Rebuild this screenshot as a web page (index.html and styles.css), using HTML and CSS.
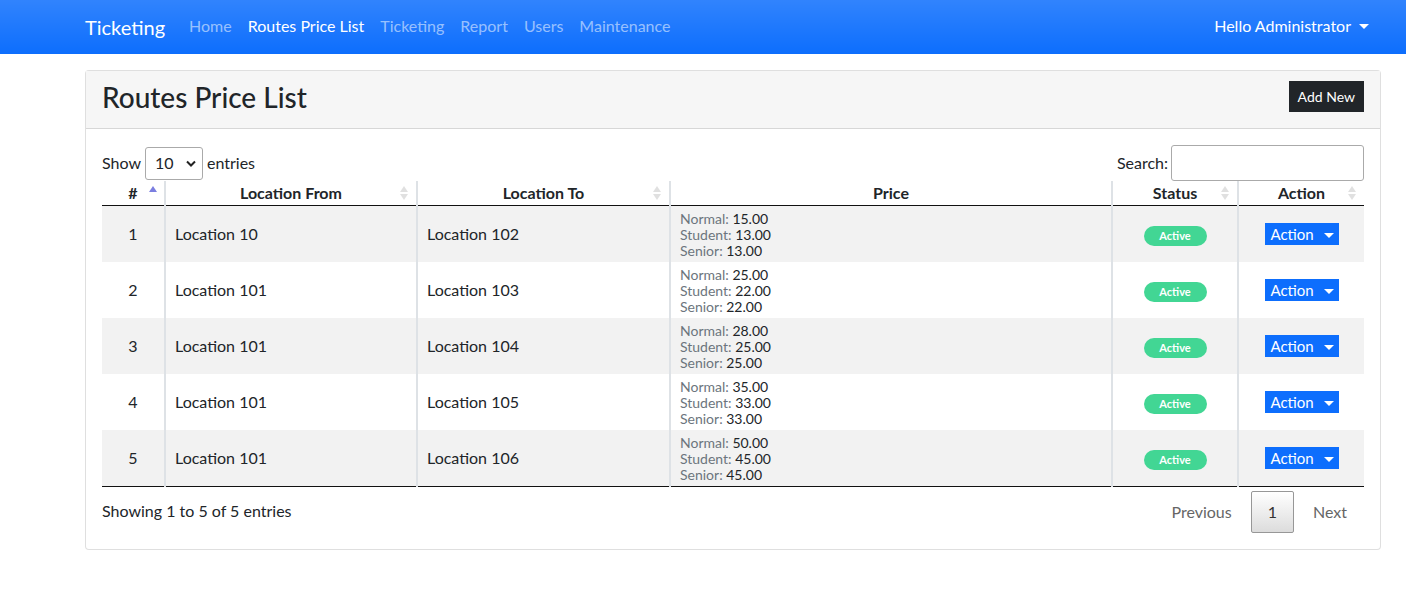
FILE: index.html
```html
<!DOCTYPE html>
<html lang="en">
<head>
<meta charset="utf-8">
<title>Routes Price List</title>
<link rel="stylesheet" href="styles.css">
</head>
<body>
<nav class="navbar">
  <div class="nav-inner">
    <a class="brand" href="#">Ticketing</a>
    <ul class="nav-links">
      <li><a href="#">Home</a></li>
      <li><a href="#" class="active">Routes Price List</a></li>
      <li><a href="#">Ticketing</a></li>
      <li><a href="#">Report</a></li>
      <li><a href="#">Users</a></li>
      <li><a href="#">Maintenance</a></li>
    </ul>
    <a class="user" href="#">Hello Administrator <span class="caret"></span></a>
  </div>
</nav>

<main class="page">
  <section class="card">
    <header class="card-header">
      <h3 class="card-title">Routes Price List</h3>
      <button class="btn-dark">Add New</button>
    </header>
    <div class="card-body">
      <div class="dt-top">
        <label class="length">Show
          <span class="select">10 <svg width="10" height="7" viewBox="0 0 10 7"><path d="M1 1.5l4 4 4-4" fill="none" stroke="#222" stroke-width="2"/></svg></span>
          entries</label>
        <label class="search">Search:<span class="search-input"></span></label>
      </div>
      <table class="dt">
        <thead>
          <tr>
            <th class="sort asc">#</th>
            <th class="sort">Location From</th>
            <th class="sort">Location To</th>
            <th>Price</th>
            <th class="sort">Status</th>
            <th class="sort">Action</th>
          </tr>
        </thead>
        <tbody>
          <tr>
            <td class="num">1</td><td>Location 10</td><td>Location 102</td>
            <td class="price"><span class="lbl">Normal:</span> 15.00<br><span class="lbl">Student:</span> 13.00<br><span class="lbl">Senior:</span> 13.00</td>
            <td class="center"><span class="badge">Active</span></td>
            <td class="center"><button class="btn-action">Action <span class="caret"></span></button></td>
          </tr>
          <tr>
            <td class="num">2</td><td>Location 101</td><td>Location 103</td>
            <td class="price"><span class="lbl">Normal:</span> 25.00<br><span class="lbl">Student:</span> 22.00<br><span class="lbl">Senior:</span> 22.00</td>
            <td class="center"><span class="badge">Active</span></td>
            <td class="center"><button class="btn-action">Action <span class="caret"></span></button></td>
          </tr>
          <tr>
            <td class="num">3</td><td>Location 101</td><td>Location 104</td>
            <td class="price"><span class="lbl">Normal:</span> 28.00<br><span class="lbl">Student:</span> 25.00<br><span class="lbl">Senior:</span> 25.00</td>
            <td class="center"><span class="badge">Active</span></td>
            <td class="center"><button class="btn-action">Action <span class="caret"></span></button></td>
          </tr>
          <tr>
            <td class="num">4</td><td>Location 101</td><td>Location 105</td>
            <td class="price"><span class="lbl">Normal:</span> 35.00<br><span class="lbl">Student:</span> 33.00<br><span class="lbl">Senior:</span> 33.00</td>
            <td class="center"><span class="badge">Active</span></td>
            <td class="center"><button class="btn-action">Action <span class="caret"></span></button></td>
          </tr>
          <tr>
            <td class="num">5</td><td>Location 101</td><td>Location 106</td>
            <td class="price"><span class="lbl">Normal:</span> 50.00<br><span class="lbl">Student:</span> 45.00<br><span class="lbl">Senior:</span> 45.00</td>
            <td class="center"><span class="badge">Active</span></td>
            <td class="center"><button class="btn-action">Action <span class="caret"></span></button></td>
          </tr>
        </tbody>
      </table>
      <div class="dt-bottom">
        <div class="info">Showing 1 to 5 of 5 entries</div>
        <div class="paging">
          <span class="pg">Previous</span>
          <span class="pg current">1</span>
          <span class="pg">Next</span>
        </div>
      </div>
    </div>
  </section>
</main>
</body>
</html>
```
FILE: styles.css
```css
* { box-sizing: border-box; }
html, body { margin: 0; padding: 0; }
body {
  font-family: "Lato", "Open Sans", sans-serif;
  font-size: 16px;
  line-height: 1.5;
  color: #212529;
  background: #fff;
}
a { text-decoration: none; color: inherit; }

.navbar {
  height: 54px;
  background: #0d6efd linear-gradient(180deg, rgba(255,255,255,.15), rgba(255,255,255,0));
}
.nav-inner {
  display: flex;
  align-items: center;
  height: 100%;
  padding: 0 37px 2px 85px;
}
.brand {
  color: #fff;
  font-size: 20px;
  margin-right: 16px;
  padding-top: 1px;
}
.nav-links {
  display: flex;
  list-style: none;
  margin: 0;
  padding: 0;
  flex: 1;
}
.nav-links a {
  display: block;
  padding: 8px;
  color: rgba(255,255,255,.55);
}
.nav-links a.active { color: #fff; }
.user { color: #fff; display: flex; align-items: center; }
.caret {
  display: inline-block;
  width: 0; height: 0;
  border-left: 5px solid transparent;
  border-right: 5px solid transparent;
  border-top: 5px solid currentColor;
  margin-left: 8px;
  vertical-align: 3px;
}

.page { padding: 16px 25px 0 85px; }
.card {
  border: 1px solid rgba(0,0,0,.125);
  border-radius: 4px;
  background: #fff;
}
.card-header {
  display: flex;
  align-items: center;
  justify-content: space-between;
  height: 58px;
  padding: 0 16px 5px;
  background: #f6f6f6;
  border-bottom: 1px solid rgba(0,0,0,.125);
}
.card-title {
  margin: 0;
  font-size: 28px;
  font-weight: 500;
  line-height: 1.2;
  margin-top: 2px;
}
.btn-dark {
  font-family: inherit;
  background: #212529;
  color: #fff;
  border: 0;
  border-radius: 0;
  font-size: 14px;
  height: 31px;
  padding: 0 9px;
  margin-top: -1px;
}
.card-body { padding: 16px 16px 16px; }

.dt-top {
  display: flex;
  justify-content: space-between;
  align-items: center;
}
.length, .search { display: flex; align-items: center; }
.select {
  display: inline-flex;
  align-items: center;
  justify-content: space-between;
  width: 58px;
  height: 33px;
  margin: 0 4px 0 4px;
  padding: 0 6px 0 9px;
  border: 1px solid #aaa;
  border-radius: 3px;
  background: #fff;
}
.search-input {
  display: block;
  width: 193px;
  height: 36px;
  margin-left: 3px;
  border: 1px solid #aaa;
  border-radius: 3px;
}

.dt {
  width: 100%;
  border-collapse: collapse;
  margin-top: 0;
}
.dt th {
  position: relative;
  font-weight: 700;
  text-align: center;
  line-height: 24px;
  padding: 0 10px;
  border-bottom: 1px solid #111;
  border-right: 2px solid #dee2e6;
}
.dt th:nth-child(1) { width: 63px; }
.dt th:nth-child(2) { width: 252px; }
.dt th:nth-child(3) { width: 253px; }
.dt th:nth-child(5) { width: 126px; }
.dt th:nth-child(6) { width: 126px; }
.dt th:last-child, .dt td:last-child { border-right: 0; }
.dt th.sort::before, .dt th.sort::after {
  content: "";
  position: absolute;
  right: 8px;
  width: 0; height: 0;
  border-left: 4px solid transparent;
  border-right: 4px solid transparent;
}
.dt th.sort::before { top: 5px; border-bottom: 6px solid rgba(0,0,0,.12); }
.dt th.sort::after { top: 13px; border-top: 6px solid rgba(0,0,0,.12); }
.dt th.sort.asc::before { border-bottom-color: #7b7ee0; top: 5px; right: 7px; }
.dt th.sort.asc::after { display: none; }

.dt td {
  height: 56px;
  padding: 4px 9px;
  border-right: 2px solid #dee2e6;
  vertical-align: middle;
}
.dt tbody tr:nth-child(odd) td { background: #f2f2f2; }
.dt tbody tr:last-child td { border-bottom: 1px solid #111; }
.dt td.num { text-align: center; }
.dt td.center { text-align: center; }
.dt td.price {
  font-size: 14px;
  line-height: 16px;
  padding: 5px 9px 3px;
}
.lbl { color: #6c757d; }
.badge {
  display: inline-block;
  width: 63px;
  height: 20px;
  line-height: 20px;
  border-radius: 10px;
  background: #42d694;
  color: #fff;
  font-size: 11px;
  font-weight: 700;
}
.btn-action {
  font-family: inherit;
  background: #0d6efd;
  color: #fff;
  border: 0;
  border-radius: 0;
  font-size: 15px;
  height: 22px;
  width: 74px;
  padding: 0;
  margin-left: 1px;
}
.btn-action .caret { margin-left: 6px; vertical-align: 2px; }

.dt-bottom {
  display: flex;
  justify-content: space-between;
  align-items: center;
  margin-top: 4px;
}
.info { margin-top: -2px; }
.paging { display: flex; align-items: center; margin-right: -1px; }
.pg {
  padding: 8px 17px;
  color: #666;
  border: 1px solid transparent;
  border-radius: 2px;
}
.pg.current {
  color: #333;
  padding: 8px 16px;
  border: 1px solid #979797;
  background: linear-gradient(180deg, #fff 0%, #dcdcdc 100%);
  margin: 0 1px;
}
```
